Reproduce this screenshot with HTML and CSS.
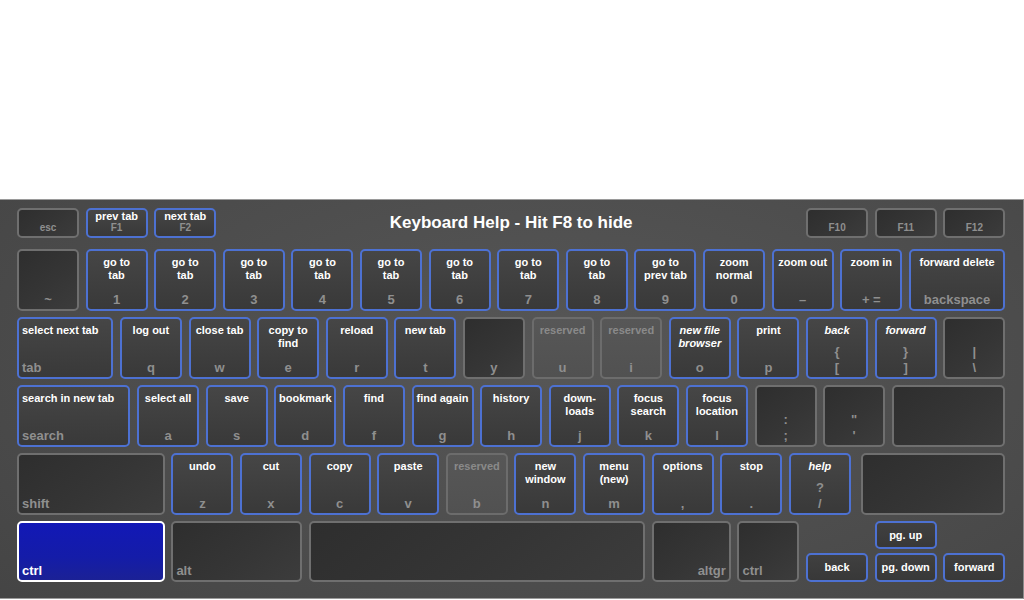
FILE: index.html
```html
<!DOCTYPE html>
<html>
<head>
<meta charset="utf-8">
<link rel="stylesheet" href="styles.css">
</head>
<body>
<div class="page">
  <div class="kb">
    <div class="row row0">
      <div class="key fnk plain end"><span class="fb">esc</span></div>
      <div class="key fnk blue"><span class="ft">prev tab</span><span class="fb">F1</span></div>
      <div class="key fnk blue"><span class="ft">next tab</span><span class="fb">F2</span></div>
      <div class="title">Keyboard Help - Hit F8 to hide</div>
      <div class="key fnk plain end"><span class="fb">F10</span></div>
      <div class="key fnk plain end"><span class="fb">F11</span></div>
      <div class="key fnk plain end"><span class="fb">F12</span></div>
    </div>

    <div class="row">
      <div class="key plain"><span class="t"></span><span class="b">~</span></div>
      <div class="key blue"><span class="t">go to<br>tab</span><span class="b">1</span></div>
      <div class="key blue"><span class="t">go to<br>tab</span><span class="b">2</span></div>
      <div class="key blue"><span class="t">go to<br>tab</span><span class="b">3</span></div>
      <div class="key blue"><span class="t">go to<br>tab</span><span class="b">4</span></div>
      <div class="key blue"><span class="t">go to<br>tab</span><span class="b">5</span></div>
      <div class="key blue"><span class="t">go to<br>tab</span><span class="b">6</span></div>
      <div class="key blue"><span class="t">go to<br>tab</span><span class="b">7</span></div>
      <div class="key blue"><span class="t">go to<br>tab</span><span class="b">8</span></div>
      <div class="key blue"><span class="t">go to<br>prev tab</span><span class="b">9</span></div>
      <div class="key blue"><span class="t">zoom<br>normal</span><span class="b">0</span></div>
      <div class="key blue"><span class="t">zoom out</span><span class="b">–</span></div>
      <div class="key blue"><span class="t">zoom in</span><span class="b">+ =</span></div>
      <div class="key blue w150"><span class="t">forward delete</span><span class="b">backspace</span></div>
    </div>

    <div class="row">
      <div class="key blue w150 left"><span class="t">select next tab</span><span class="b">tab</span></div>
      <div class="key blue"><span class="t">log out</span><span class="b">q</span></div>
      <div class="key blue"><span class="t">close tab</span><span class="b">w</span></div>
      <div class="key blue"><span class="t">copy to<br>find</span><span class="b">e</span></div>
      <div class="key blue"><span class="t">reload</span><span class="b">r</span></div>
      <div class="key blue"><span class="t">new tab</span><span class="b">t</span></div>
      <div class="key plain"><span class="t"></span><span class="b">y</span></div>
      <div class="key reserved"><span class="t">reserved</span><span class="b">u</span></div>
      <div class="key reserved"><span class="t">reserved</span><span class="b">i</span></div>
      <div class="key blue"><span class="t it">new file<br>browser</span><span class="b">o</span></div>
      <div class="key blue"><span class="t">print</span><span class="b">p</span></div>
      <div class="key blue"><span class="t it">back</span><span class="b b2">{<br>[</span></div>
      <div class="key blue"><span class="t it">forward</span><span class="b b2">}<br>]</span></div>
      <div class="key plain"><span class="t"></span><span class="b b2">|<br>\</span></div>
    </div>

    <div class="row">
      <div class="key blue w175 left"><span class="t">search in new tab</span><span class="b">search</span></div>
      <div class="key blue"><span class="t">select all</span><span class="b">a</span></div>
      <div class="key blue"><span class="t">save</span><span class="b">s</span></div>
      <div class="key blue"><span class="t">bookmark</span><span class="b">d</span></div>
      <div class="key blue"><span class="t">find</span><span class="b">f</span></div>
      <div class="key blue"><span class="t">find again</span><span class="b">g</span></div>
      <div class="key blue"><span class="t">history</span><span class="b">h</span></div>
      <div class="key blue"><span class="t">down-<br>loads</span><span class="b">j</span></div>
      <div class="key blue"><span class="t">focus<br>search</span><span class="b">k</span></div>
      <div class="key blue"><span class="t">focus<br>location</span><span class="b">l</span></div>
      <div class="key plain"><span class="t"></span><span class="b b2">:<br>;</span></div>
      <div class="key plain"><span class="t"></span><span class="b b2">"<br>'</span></div>
      <div class="key plain w175"></div>
    </div>

    <div class="row">
      <div class="key plain w225 left"><span class="t"></span><span class="b">shift</span></div>
      <div class="key blue"><span class="t">undo</span><span class="b">z</span></div>
      <div class="key blue"><span class="t">cut</span><span class="b">x</span></div>
      <div class="key blue"><span class="t">copy</span><span class="b">c</span></div>
      <div class="key blue"><span class="t">paste</span><span class="b">v</span></div>
      <div class="key reserved"><span class="t">reserved</span><span class="b">b</span></div>
      <div class="key blue"><span class="t">new<br>window</span><span class="b">n</span></div>
      <div class="key blue"><span class="t">menu<br>(new)</span><span class="b">m</span></div>
      <div class="key blue"><span class="t">options</span><span class="b">,</span></div>
      <div class="key blue"><span class="t">stop</span><span class="b">.</span></div>
      <div class="key blue"><span class="t it">help</span><span class="b b2">?<br>/</span></div>
      <div class="key plain grow"></div>
    </div>

    <div class="row row5">
      <div class="key active w225 left"><span class="t"></span><span class="b">ctrl</span></div>
      <div class="key plain w200 left"><span class="t"></span><span class="b">alt</span></div>
      <div class="key plain w500"></div>
      <div class="key plain w125 right"><span class="t"></span><span class="b">altgr</span></div>
      <div class="key plain left"><span class="t"></span><span class="b">ctrl</span></div>
      <div class="arrows">
        <div class="key blue ak a-back">back</div>
        <div class="key blue ak a-up">pg. up</div>
        <div class="key blue ak a-down">pg. down</div>
        <div class="key blue ak a-fwd">forward</div>
      </div>
    </div>
  </div>
</div>
</body>
</html>
```

FILE: styles.css
```css
:root {
  --u: 68.62px;
  --g: 6.62px;
}

html, body {
  margin: 0;
  padding: 0;
  background: #ffffff;
}

body {
  font-family: "Liberation Sans", Arial, sans-serif;
}

.page {
  height: 600px;
  padding-top: 199px;
  box-sizing: border-box;
}

.kb {
  box-sizing: border-box;
  width: 1024px;
  height: 400px;
  border-top: 1px solid #9a9a9a;
  border-right: 1px solid #8a8a8a;
  border-bottom: 1px solid #9a9a9a;
  padding: 8px 0 0 17px;
  background: radial-gradient(ellipse 75% 95% at 55% 40%, #575757 0%, #4c4c4c 60%, #444444 100%);
  display: flex;
  flex-direction: column;
  gap: 6px;
}

.row {
  display: flex;
  gap: var(--g);
  width: calc(14.5 * var(--u) - var(--g));
  height: 62px;
  flex: none;
}

.row0 {
  height: 30px;
  margin-bottom: 5px;
}

.row5 {
  height: 61px;
}

.key {
  box-sizing: border-box;
  width: calc(var(--u) - var(--g));
  height: 100%;
  flex: none;
  border: 2px solid #6e6e6e;
  border-radius: 5px;
  display: flex;
  flex-direction: column;
  justify-content: space-between;
  align-items: center;
  text-align: center;
  padding: 5px 2px 3px;
  overflow: hidden;
}

.w125 { width: calc(1.25 * var(--u) - var(--g)); }
.w150 { width: calc(1.5 * var(--u) - var(--g)); }
.w175 { width: calc(1.75 * var(--u) - var(--g)); }
.w200 { width: calc(2 * var(--u) - var(--g)); }
.w225 { width: calc(2.25 * var(--u) - var(--g)); }
.w500 { width: calc(5 * var(--u) - var(--g)); }
.grow { flex: 1; width: auto; margin-left: 4px; }

.plain {
  background: linear-gradient(140deg, #2e2e2e 0%, #353535 55%, #3c3c3c 100%);
  border-color: #6f6f6f;
}

.blue {
  background: linear-gradient(180deg, #464646 0%, #3e3e3e 60%, #393939 100%);
  border-color: #4d71d2;
}

.reserved {
  background: linear-gradient(180deg, #575757 0%, #515151 100%);
  border-color: #6c6c6c;
}

.reserved .t {
  color: #8a8a8a;
}

.active {
  background: linear-gradient(180deg, #1218b6 0%, #141ca8 60%, #1b2195 100%);
  border-color: #ffffff;
}

.active .b {
  color: #ffffff;
}

.left {
  align-items: flex-start;
  text-align: left;
  padding-left: 3px;
}

.right {
  align-items: flex-end;
  text-align: right;
  padding-right: 3px;
}

.t {
  color: #ffffff;
  font-weight: bold;
  font-size: 11px;
  line-height: 13px;
  white-space: nowrap;
}

.it {
  font-style: italic;
}

.b {
  color: #8f8f8f;
  font-weight: bold;
  font-size: 13px;
  line-height: 13px;
  white-space: nowrap;
}

.b2 {
  line-height: 16px;
  margin-bottom: -2px;
}

/* function row */
.fnk {
  justify-content: flex-start;
  padding: 1px 2px 0;
}

.fnk.end {
  justify-content: flex-end;
  padding-bottom: 3px;
}

.ft {
  color: #ffffff;
  font-weight: bold;
  font-size: 11px;
  line-height: 10px;
  white-space: nowrap;
}

.fb {
  color: #8f8f8f;
  font-weight: bold;
  font-size: 10px;
  line-height: 10px;
  white-space: nowrap;
}

.ft + .fb {
  margin-top: 2px;
}

.title {
  flex: 1;
  align-self: center;
  text-align: center;
  color: #ffffff;
  font-weight: bold;
  font-size: 17px;
  line-height: 20px;
  white-space: nowrap;
}

/* arrow cluster */
.arrows {
  width: calc(3 * var(--u) - var(--g));
  height: 100%;
  flex: none;
  display: grid;
  grid-template-columns: repeat(3, 1fr);
  grid-template-rows: 28px 29px;
  column-gap: var(--g);
  row-gap: 4px;
}

.ak {
  width: auto;
  height: auto;
  justify-content: center;
  padding: 0 2px;
  color: #ffffff;
  font-weight: bold;
  font-size: 11px;
  line-height: 13px;
  white-space: nowrap;
  background: linear-gradient(180deg, #404040 0%, #383838 100%);
}

.a-up { grid-column: 2; grid-row: 1; }
.a-back { grid-column: 1; grid-row: 2; }
.a-down { grid-column: 2; grid-row: 2; }
.a-fwd { grid-column: 3; grid-row: 2; }
```
